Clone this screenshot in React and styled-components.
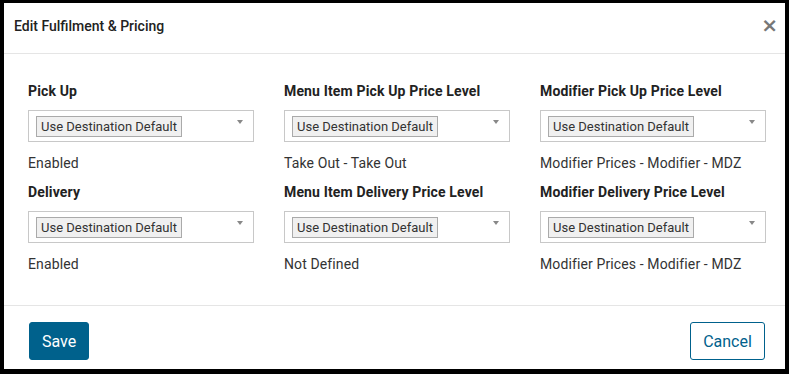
import styled, { createGlobalStyle } from 'styled-components';

const GlobalStyle = createGlobalStyle`
  html, body {
    margin: 0;
    padding: 0;
    background: #000;
  }
  body {
    font-family: Roboto, "Liberation Sans", Arial, sans-serif;
  }
`;

const fields = [
  { label: 'Pick Up', value: 'Enabled' },
  { label: 'Menu Item Pick Up Price Level', value: 'Take Out - Take Out' },
  { label: 'Modifier Pick Up Price Level', value: 'Modifier Prices - Modifier - MDZ' },
  { label: 'Delivery', value: 'Enabled' },
  { label: 'Menu Item Delivery Price Level', value: 'Not Defined' },
  { label: 'Modifier Delivery Price Level', value: 'Modifier Prices - Modifier - MDZ' },
];

const App = () => {
  return (
    <>
      <GlobalStyle />
      <Frame>
        <Dialog>
          <Header>
            <Title>Edit Fulfilment &amp; Pricing</Title>
            <Close aria-label="Close">×</Close>
          </Header>
          <Body>
            {fields.map(f => (
              <Field key={f.label}>
                <Label>{f.label}</Label>
                <Select>
                  <Tag>Use Destination Default</Tag>
                  <Arrow />
                </Select>
                <Value>{f.value}</Value>
              </Field>
            ))}
          </Body>
          <Footer>
            <Button primary>Save</Button>
            <Button>Cancel</Button>
          </Footer>
        </Dialog>
      </Frame>
    </>
  );
};

const Frame = styled.div`
  padding: 3px 4px 5px 4px;
  height: 374px;
  box-sizing: border-box;
`;

const Dialog = styled.div`
  background: #fff;
  height: 100%;
  display: flex;
  flex-direction: column;
`;

const Header = styled.div`
  height: 50px;
  display: flex;
  align-items: center;
  justify-content: space-between;
  padding: 0 7px 0 10px;
  border-bottom: 1px solid #e5e5e5;
`;

const Title = styled.h4`
  margin: 0;
  font-size: 14px;
  font-weight: 500;
  color: #222;
  padding-bottom: 4px;
`;

const Close = styled.span`
  font-family: "DejaVu Sans", sans-serif;
  font-size: 20px;
  font-weight: bold;
  color: #777;
  line-height: 1;
  margin-bottom: 6px;
`;

const Body = styled.div`
  flex: 1;
  display: grid;
  grid-template-columns: repeat(3, 226px);
  column-gap: 30px;
  row-gap: 12px;
  align-content: start;
  padding: 29px 24px 0 24px;
  border-bottom: 1px solid #e5e5e5;
`;

const Field = styled.div`
  display: flex;
  flex-direction: column;
`;

const Label = styled.label`
  font-size: 14px;
  font-weight: bold;
  color: #222;
  line-height: 17px;
  letter-spacing: 0.15px;
  margin-bottom: 10px;
`;

const Select = styled.div`
  position: relative;
  height: 32px;
  box-sizing: border-box;
  border: 1px solid #c8c8c8;
  display: flex;
  align-items: center;
  padding: 0 7px;
`;

const Tag = styled.span`
  font-size: 13px;
  color: #333;
  background: #f0f0f0;
  border: 1px solid #aaa;
  padding: 2px 4px;
  line-height: 15px;
`;

const Arrow = styled.span`
  position: absolute;
  right: 10px;
  top: 9px;
  width: 0;
  height: 0;
  border-left: 3px solid transparent;
  border-right: 3px solid transparent;
  border-top: 4px solid #888;
`;

const Value = styled.div`
  font-size: 14px;
  color: #333;
  line-height: 17px;
  letter-spacing: 0.12px;
  margin-top: 13px;
`;

const Footer = styled.div`
  height: 63px;
  box-sizing: border-box;
  display: flex;
  justify-content: space-between;
  align-items: flex-start;
  padding: 16px 20px 0 25px;
`;

const Button = styled.button`
  height: 38px;
  box-sizing: border-box;
  padding: 0 12px;
  border-radius: 3px;
  font-family: Roboto, "Liberation Sans", Arial, sans-serif;
  font-size: 16px;
  border: 1px solid #00618c;
  background: ${p => (p.primary ? '#00618c' : '#fff')};
  color: ${p => (p.primary ? '#fff' : '#00618c')};
  min-width: ${p => (p.primary ? '60px' : '75px')};
`;

export default App;
